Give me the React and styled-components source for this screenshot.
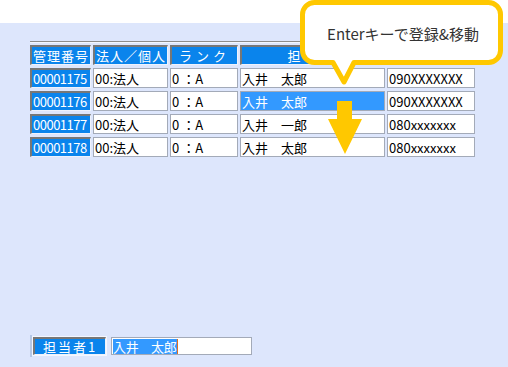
import React from 'react';
import styled, { createGlobalStyle } from 'styled-components';

const GlobalStyle = createGlobalStyle`
  html, body { margin: 0; padding: 0; background: #fff; }
  body { font-family: "Noto Sans CJK JP", "Noto Sans", sans-serif; }
`;

const Screen = styled.div`
  position: relative;
  width: 508px;
  height: 367px;
  overflow: hidden;
`;

const TopBar = styled.div`
  height: 23px;
  background: #fff;
`;

const Panel = styled.div`
  box-sizing: border-box;
  height: 344px;
  background: #dde6fc;
  display: flex;
  flex-direction: column;
  padding: 18px 0 10px 30px;
`;

const Rule = styled.div`
  width: 473px;
  border-top: 1px solid #8c8c8c;
  border-bottom: 1px solid #f4f7ff;
  margin-bottom: 2px;
`;

const Grid = styled.div`
  display: grid;
  grid-template-columns: 61px 75px 68px 145px 88px;
  grid-auto-rows: 20px;
  column-gap: 2px;
  row-gap: 3px;
`;

const HeadCell = styled.div`
  box-sizing: border-box;
  background: #0a84ec;
  color: #fff;
  border-style: solid;
  border-width: 2px 1px 1px 2px;
  border-color: #777 #eef2fc #eef2fc #777;
  font-size: 13px;
  letter-spacing: ${p => (p.$spacing !== undefined ? p.$spacing : 1)}px;
  display: flex;
  align-items: center;
  justify-content: ${p => (p.$left ? 'flex-start' : 'center')};
  padding-left: ${p => (p.$left ? '1px' : '0')};
  white-space: nowrap;
  overflow: hidden;
`;

const Field = styled.div`
  box-sizing: border-box;
  border: 1px solid #a3aab8;
  background: ${p => (p.$selected ? '#3399ff' : '#fff')};
  color: ${p => (p.$selected ? '#fff' : '#000')};
  font-size: 13px;
  padding-left: 1px;
  display: flex;
  align-items: center;
  white-space: pre;
  overflow: hidden;
`;

const Footer = styled.div`
  margin-top: auto;
  display: flex;
  align-items: center;
`;

const Tick = styled.div`
  width: 2px;
  height: 22px;
  background: #b6c8e6;
`;

const Label = styled(HeadCell)`
  width: 73px;
  height: 18px;
  margin-left: 1px;
  box-shadow: 0 0 0 1px #f4f7ff;
`;

const Input = styled.div`
  box-sizing: border-box;
  width: 141px;
  height: 18px;
  margin-left: 5px;
  background: #fff;
  border: 1px solid #a3aab8;
  display: flex;
  align-items: center;
  font-size: 13px;
  padding-left: 1px;
`;

const Selection = styled.span`
  background: #3399ff;
  color: #fff;
  line-height: 15px;
  white-space: pre;
  letter-spacing: -0.3px;
`;

const Caret = styled.span`
  width: 1px;
  height: 15px;
  background: #e07020;
`;

const Callout = styled.div`
  position: absolute;
  left: 298px;
  top: 0;
  width: 210px;
  height: 90px;
`;

const CalloutText = styled.div`
  position: absolute;
  left: 4px;
  top: 0;
  width: 202px;
  height: 66px;
  display: flex;
  align-items: center;
  justify-content: center;
  font-size: 15px;
  color: #333;
  white-space: nowrap;
`;

const Arrow = styled.svg`
  position: absolute;
  left: 326px;
  top: 100px;
`;

const rows = [
  { id: '00001175', kind: '00:法人', rank: '0 ：A', name: '入井　太郎', tel: '090XXXXXXX' },
  { id: '00001176', kind: '00:法人', rank: '0 ：A', name: '入井　太郎', tel: '090XXXXXXX', selected: true },
  { id: '00001177', kind: '00:法人', rank: '0 ：A', name: '入井　一郎', tel: '080xxxxxxx' },
  { id: '00001178', kind: '00:法人', rank: '0 ：A', name: '入井　太郎', tel: '080xxxxxxx' },
];

export default function App() {
  return (
    <Screen>
      <GlobalStyle />
      <TopBar />
      <Panel>
        <Rule />
        <Grid>
          <HeadCell>管理番号</HeadCell>
          <HeadCell>法人／個人</HeadCell>
          <HeadCell $spacing={4}>ランク</HeadCell>
          <HeadCell $spacing={4}>担当者</HeadCell>
          <HeadCell>電話番号</HeadCell>
          {rows.map(r => (
            <React.Fragment key={r.id}>
              <HeadCell $left $spacing={-0.5}>{r.id}</HeadCell>
              <Field>{r.kind}</Field>
              <Field>{r.rank}</Field>
              <Field $selected={r.selected}>{r.name}</Field>
              <Field>{r.tel}</Field>
            </React.Fragment>
          ))}
        </Grid>
        <Footer>
          <Tick />
          <Label $spacing={2}>担当者1</Label>
          <Input>
            <Selection>入井　太郎</Selection>
            <Caret />
          </Input>
        </Footer>
      </Panel>

      <Callout>
        <svg width="210" height="90" viewBox="0 0 210 90">
          <path
            d="M16.5 2.5 H190.5 A12 12 0 0 1 202.5 14.5 V50.5 A12 12 0 0 1 190.5 62.5 H56 L46 82 L35 62.5 H16.5 A12 12 0 0 1 4.5 50.5 V14.5 A12 12 0 0 1 16.5 2.5 Z"
            fill="#fff"
            stroke="#ffc800"
            strokeWidth="5"
            strokeLinejoin="round"
          />
        </svg>
        <CalloutText>Enterキーで登録&amp;移動</CalloutText>
      </Callout>

      <Arrow width="38" height="56" viewBox="0 0 38 56">
        <polygon points="11,1 26,1 26,19 36,19 19,54 2,19 11,19" fill="#ffc800" />
      </Arrow>
    </Screen>
  );
}
